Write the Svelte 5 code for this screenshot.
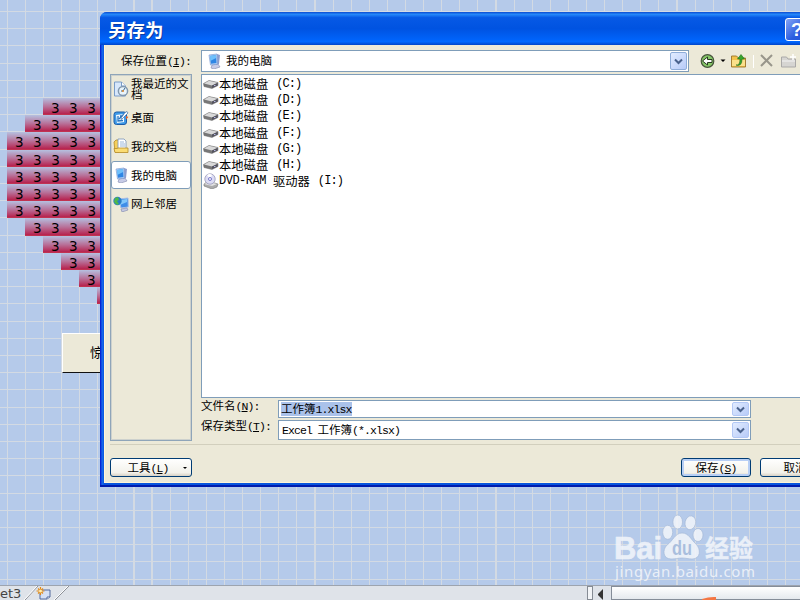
<script>
  const pinkRows = [43, 25, 7, 7, 7, 7, 7, 25, 43, 61, 79, 97].map((x) => ({
    x,
    count: Math.round((97 - x) / 18)
  }));

  const places = [
    { icon: "recent", label: "我最近的文档" },
    { icon: "desktop", label: "桌面" },
    { icon: "docs", label: "我的文档" },
    { icon: "computer", label: "我的电脑", active: true },
    { icon: "network", label: "网上邻居" }
  ];

  const drives = ["C", "D", "E", "F", "G", "H"];
</script>

{#snippet monitor()}
  <svg class="icon" viewBox="0 0 16 16">
    <path d="M6 12l6-1 2 3-6 2-3-1z" fill="#c7cbe6" stroke="#8288ad" stroke-width=".6" />
    <path d="M11 1l3 1-1 9-3 1z" fill="#8d9ccc" />
    <path d="M3 2l8-1 .5 10-7 1z" fill="#b9d3f6" stroke="#7f9fd4" stroke-width=".7" />
    <path d="M4 3l6-1 .5 8-5.500 .7z" fill="#2f86e4" />
    <path d="M4 3l6-1 .2 3-6 3z" fill="#6fc0fa" />
  </svg>
{/snippet}

{#snippet placeIcon(name)}
  {#if name === "computer"}
    {@render monitor()}
  {:else}
    <svg class="icon" viewBox="0 0 16 16">
      {#if name === "recent"}
        <path d="M1.500 1h7l4 4v10h-11z" fill="#d7e7fb" stroke="#7a9cc8" />
        <path d="M8.500 1v4h4" fill="#fff" stroke="#7a9cc8" />
        <circle cx="10" cy="10" r="4.600" fill="#e9f4fb" stroke="#8298ae" stroke-width="1.500" />
        <path d="M10 10l2-3M10 10H8" stroke="#36648c" fill="none" />
        <circle cx="10" cy="10" r="1" fill="#e08a30" />
      {:else if name === "desktop"}
        <rect x="1" y="2" width="12.500" height="12.500" rx="2.500" fill="#3f9ae8" stroke="#1c5ca8" />
        <path d="M3 5l8-1v8l-7 1z" fill="#f2f9ff" />
        <path d="M5 6v5l5-.5M6 9l5-5M7 6h3" stroke="#2874c0" stroke-width="1.300" fill="none" />
        <path d="M12 2.500l2-1 1 1.500-6 6-1 .5.500-2z" fill="#fff" stroke="#3d6da8" stroke-width=".7" />
        <path d="M13 6l2.500 1L13 9.500z" fill="#e1642c" />
      {:else if name === "docs"}
        <path d="M1 4l2-2h3v12H2z" fill="#f5cf5a" stroke="#b48a26" stroke-width=".8" />
        <path d="M5 1h6l2 2v9H5z" fill="#fff" stroke="#7893b8" stroke-width=".8" />
        <path d="M7 4h4M7 6h5M7 8h5" stroke="#9bb7da" />
        <path d="M1 10.500h3l1-.5h10v4.500H2z" fill="#fbdc73" stroke="#b48a26" stroke-width=".8" />
      {:else}
        <path d="M6 3l9-1 .3 9-7.300 1z" fill="#3f8de8" stroke="#a9bfe6" />
        <path d="M7 4l7-1v3l-7 3z" fill="#82c7fa" />
        <path d="M8 13l6-1 1 2-6 2z" fill="#c2c7e2" stroke="#8288ad" stroke-width=".6" />
        <circle cx="4.500" cy="5" r="4.200" fill="#287bc8" />
        <path d="M2 2l3-1 1 3-2 1 2 3-2 1-3-3z" fill="#4fb848" />
      {/if}
    </svg>
  {/if}
{/snippet}

{#snippet dropButton()}
  <span class="drop">
    <svg viewBox="0 0 9 7"><path d="M1 1.500l3.500 3.500L8 1.500" fill="none" stroke="#4a628c" stroke-width="2" /></svg>
  </span>
{/snippet}

<div class="screen">
  <div class="cells">
    {#each pinkRows as row}
      <div class="cell-row" style="margin-left: {row.x}px">
        {#each Array(row.count) as _}<span>3</span>{/each}
      </div>
    {/each}
  </div>
  <div class="sheet-button">惊喜</div>

  <footer>
    <div class="tab-name">et3</div>
    <svg class="tab-shape" viewBox="0 0 50 14">
      <path d="M4 14L17 0M34 14L48 0" stroke="#8c9097" />
      <path d="M3 14L16 0M33 14L47 0" stroke="#fff" />
      <path d="M19 4h10v7l-3 2h-7z" fill="#d5e1f6" stroke="#526a9e" />
      <path d="M26 13v-2h3" fill="#fff" stroke="#526a9e" />
      <path d="M19.500 1v8M15.500 5h8M17 2.500l5 5M22 2.500l-5 5" stroke="#e38b19" stroke-width="1.200" />
      <circle cx="19.500" cy="5" r="1.500" fill="#fff0b0" />
    </svg>
    <div class="splitter"></div>
    <div class="scroll-arrow"></div>
    <div class="thumb">
      <svg viewBox="0 0 14 3"><path d="M0 2Q6 0 12 0h2v3H0z" fill="#f47643" /></svg>
    </div>
  </footer>

  <svg class="watermark" viewBox="0 0 150 72">
    <g class="ink">
      <ellipse cx="54.700" cy="20.300" rx="5" ry="7" />
      <ellipse cx="64.700" cy="10" rx="4.800" ry="7" />
      <ellipse cx="77.300" cy="10.700" rx="5.300" ry="7" transform="rotate(12 77 11)" />
      <ellipse cx="85" cy="23" rx="5" ry="6.500" />
      <path d="M69 21c7 0 9 7 14 11 5 5 5 15-4 15-4 0-6-1-10-1s-6 1-11 1c-8 0-9-9-4-14 6-4 8-12 15-12z" />
      <text x="1" y="46.500" textLength="48" lengthAdjust="spacingAndGlyphs" class="bai">Bai</text>
      <text x="92" y="45" textLength="48" lengthAdjust="spacingAndGlyphs" class="exp">经验</text>
      <text x="2" y="65" textLength="140" class="url">jingyan.baidu.com</text>
    </g>
    <text x="59" y="43" textLength="20" lengthAdjust="spacingAndGlyphs" class="du">du</text>
  </svg>

  <div class="dialog">
    <header><h1>另存为</h1><span class="help">?</span></header>
    <div class="body">
      <div class="location">
        <span class="location-label">保存位置<i>(<u>I</u>):</i></span>
        <div class="combo look-in">
          {@render monitor()}
          <span>我的电脑</span>
          {@render dropButton()}
        </div>
        <svg class="toolbar" viewBox="0 0 104 18">
          <circle cx="11.500" cy="9" r="6.300" fill="#86c768" stroke="#46543b" stroke-width="1.200" />
          <path d="M6.500 9l5-4v2.500h4.500v3h-4.500V13z" fill="#fff" stroke="#283b20" />
          <path d="M24.500 7.500h5L27 10z" />
          <path d="M35.500 4h5l2 2h7v9h-14z" fill="#f3c34b" stroke="#9b7428" stroke-width=".9" />
          <path d="M36 8h13v6H36z" fill="#fbe08a" />
          <path d="M40 13q4 1 4-6h-2.500L45 2.500 48.500 7H46q0 8-6 6z" fill="#37a42d" stroke="#1b6e1a" stroke-width=".6" />
          <path d="M57.500 3v13" stroke="#fff" />
          <path d="M65 3l11 11M76 3L65 14" stroke="#98968b" stroke-width="2" />
          <path d="M85.500 5h5l1.500 2h7.500v8h-14z" fill="#d6d5d2" stroke="#aaa9a8" />
          <path d="M86 9h13" stroke="#f3f3f3" />
          <path d="M97 2v6M94 5h6" stroke="#fff" stroke-width="1.500" />
        </svg>
      </div>

      <div class="main">
        <nav>
          {#each places as place}
            <div class="place" class:active={place.active}>
              {@render placeIcon(place.icon)}
              <span>{place.label}</span>
            </div>
          {/each}
        </nav>

        <div class="right">
          <div class="files">
            {#each drives as drive}
              <div class="file">
                <svg class="icon" viewBox="0 0 16 16">
                  <path d="M.5 7.500L6 4.500l9 2v3L9 12.500l-8-2z" fill="#777" stroke="#666" stroke-width=".5" />
                  <path d="M1 7.500l5-2.700 8.500 1.900L9 9.500z" fill="#d9d9d9" />
                  <path d="M9 9.500l5.500-2.500v2.500L9 12z" fill="#555460" />
                  <path d="M11 9.500h1.500" stroke="#b7bae5" />
                </svg>
                <span>本地磁盘</span><i>({drive}:)</i>
              </div>
            {/each}
            <div class="file">
              <svg class="icon" viewBox="0 0 16 16">
                <path d="M1 11l4-3 10 3-1 3-5 2-8-3z" fill="#aaa" stroke="#777" stroke-width=".6" />
                <path d="M1 11l5-2 8 2-5 2z" fill="#e2e2e2" />
                <circle cx="7" cy="6" r="5.200" fill="#dcdcf4" stroke="#9999b9" stroke-width=".8" />
                <path d="M7 6L4 2q3-2 5 0z" fill="#fff" />
                <circle cx="7" cy="6" r="1.500" fill="#fff" stroke="#7777c9" />
              </svg>
              <i class="dvd">DVD-RAM</i><span>驱动器</span><i>(I:)</i>
            </div>
          </div>

          <div class="field name-field">
            <span class="field-label">文件名<i>(<u>N</u>):</i></span>
            <div class="combo">
              <mark>工作簿<i>1.xlsx</i></mark>
              {@render dropButton()}
            </div>
          </div>
          <div class="field type-field">
            <span class="field-label">保存类型<i>(<u>T</u>):</i></span>
            <div class="combo">
              <span class="type"><i>Excel</i> 工作簿<i>(*.xlsx)</i></span>
              {@render dropButton()}
            </div>
          </div>
        </div>
      </div>

      <div class="actions">
        <button class="tools">工具<i>(<u>L</u>)</i><b></b></button>
        <button class="save">保存<i>(<u>S</u>)</i></button>
        <button class="cancel">取消</button>
      </div>
    </div>
  </div>
</div>

<style>
  :global(body) {
    overflow: hidden;
  }

  .screen {
    position: relative;
    box-sizing: border-box;
    width: 800px;
    height: 600px;
    padding-top: 98px;
    overflow: hidden;
    color: #000;
    font: 11.5px/14px "Noto Sans CJK SC", sans-serif;
    background:
      repeating-linear-gradient(90deg, transparent 0 6.7px, #d3dae3 6.7px 7.8px, transparent 7.8px 18.1px),
      repeating-linear-gradient(transparent 0 10.9px, #d3dae3 10.9px 12px, transparent 12px 17.2px),
      #b5caea;
  }

  i {
    font: 11.5px/12px "Liberation Mono", monospace;
    letter-spacing: -0.9px;
  }

  u {
    text-underline-offset: 1px;
  }

  .icon {
    flex: none;
    width: 16px;
    height: 16px;
  }

  .cells {
    height: 235px;
  }

  .cell-row {
    display: flex;
    height: 17.2px;
    background: linear-gradient(#b5c0e0, #b87199 50%, #b72652 92%, #c63a50);
  }

  .cell-row span {
    box-sizing: border-box;
    width: 18.1px;
    padding-left: 8px;
    font: 13.5px/20px "DejaVu Sans", sans-serif;
  }

  .sheet-button {
    box-sizing: border-box;
    width: 120px;
    height: 40px;
    margin-left: 62px;
    padding-left: 27px;
    border: 1px solid #fff;
    border-bottom-color: #111;
    background: #ece9d8;
    font-size: 13px;
    line-height: 36px;
  }

  footer {
    display: flex;
    height: 14px;
    margin-top: 212px;
    border-top: 1px solid #9da4af;
    background: #dfe3e9;
  }

  .tab-name {
    width: 21px;
    color: #444;
    font: 13px/16px "DejaVu Sans", sans-serif;
  }

  .tab-shape {
    width: 50px;
    height: 14px;
  }

  .splitter {
    box-sizing: border-box;
    width: 6px;
    margin-left: 516px;
    border: 1px solid #858b94;
    background: #f2f4f7;
  }

  .scroll-arrow {
    margin: 3px 8px 0 5px;
    border: 5px solid transparent;
    border-left: 0;
    border-right-color: #333;
  }

  .thumb {
    flex: 1;
    border: 1px solid #858d99;
    border-right: 0;
    background: linear-gradient(#fff, #e5e9ee);
  }

  .thumb svg {
    display: block;
    width: 14px;
    height: 3px;
    margin: 10px 0 0 90px;
  }

  .watermark {
    position: absolute;
    left: 613px;
    top: 512px;
    width: 150px;
    height: 72px;
    opacity: 0.85;
  }

  .ink {
    fill: #f3f6fb;
    stroke: #a4b7d6;
    stroke-width: 0.7px;
  }

  .bai {
    stroke: #f3f6fb;
    font: bold 32px "Liberation Sans", sans-serif;
  }

  .exp {
    stroke: #f3f6fb;
    stroke-width: 0.4px;
    font: bold 24px "Noto Sans CJK SC", sans-serif;
  }

  .url {
    font: 15px "Noto Sans", sans-serif;
    stroke: none;
  }

  .du {
    fill: #a8bddd;
    font: bold 20px "Liberation Sans", sans-serif;
  }

  .dialog {
    position: absolute;
    box-sizing: border-box;
    left: 100px;
    top: 12px;
    width: 740px;
    height: 475px;
    padding: 0 4px 4px;
    border-radius: 7px 0 0 0;
    background: linear-gradient(90deg, #0019cf, #0831d9 1px, #166aee 2px, #0855dd 4px);
    box-shadow: inset 0 -2px #001cae;
  }

  header {
    display: flex;
    height: 33px;
    margin: 0 -4px;
    border-radius: 7px 0 0 0;
    background: linear-gradient(#0a4ad0, #2588fa 7%, #0759e5 17%, #0053e1 50%, #0061f7 80%, #0068ff 90%, #0044c8);
  }

  h1 {
    width: 677px;
    margin: 0;
    padding-left: 8px;
    color: #fff;
    font: bold 18.5px/34px "Noto Sans CJK SC", sans-serif;
    text-shadow: 1px 1px #0b3ba0;
  }

  .help {
    box-sizing: border-box;
    width: 23px;
    height: 23px;
    margin-top: 6px;
    border: 1px solid #fff;
    border-radius: 3px;
    background: linear-gradient(135deg, #85a5f5, #2b5de0 60%, #2353d5);
    color: #fff;
    font: bold 19px/22px "Liberation Sans", sans-serif;
    padding-left: 5px;
  }

  .body {
    box-sizing: border-box;
    height: 438px;
    padding: 5px 0 0 6px;
    background: #ece9d8;
    box-shadow: inset 1px -1px #fff5d8;
  }

  .location {
    display: flex;
    height: 24px;
  }

  .location-label {
    width: 80px;
    padding: 3px 0 0 11px;
  }

  .combo {
    display: flex;
    box-sizing: border-box;
    align-items: center;
    border: 1px solid #7f9db9;
    background: #fff;
  }

  .look-in {
    width: 488px;
    height: 22px;
    padding-left: 4px;
    gap: 4px;
  }

  .look-in > span:not(.drop) {
    padding-bottom: 2px;
  }

  .drop {
    display: flex;
    box-sizing: border-box;
    align-items: center;
    justify-content: center;
    width: 17px;
    height: calc(100% - 2px);
    margin: 1px 1px 1px auto;
    border: 1px solid #b3c8f5;
    border-radius: 2px;
    background: linear-gradient(135deg, #e2ecff, #b7cbf8);
  }

  .look-in .drop {
    border-color: #8fadd8;
  }

  .drop svg {
    width: 9px;
    height: 7px;
  }

  .toolbar {
    width: 104px;
    height: 18px;
    margin: 2px 0 0 7px;
  }

  .main {
    display: flex;
    gap: 9px;
    height: 370px;
  }

  nav {
    box-sizing: border-box;
    width: 82px;
    height: 367px;
    border: 1px solid #8fa5b9;
    box-shadow: inset 0 0 0 1px #cdd1cd;
  }

  .place {
    display: flex;
    box-sizing: border-box;
    align-items: center;
    width: 80px;
    height: 28.6px;
    gap: 2px;
    padding-left: 2px;
    line-height: 11px;
  }

  .place span {
    width: 60px;
  }

  .active {
    border: 1px solid #7f9db9;
    border-radius: 3px;
    background: #fff;
    padding-left: 1px;
  }

  .right {
    flex: 1;
  }

  .files {
    box-sizing: border-box;
    height: 324px;
    padding: 1px 0 0 1px;
    border: 1px solid #7f9db9;
    background: #fff;
  }

  .file {
    display: flex;
    align-items: center;
    height: 16.2px;
    font-size: 12.3px;
  }

  .file i {
    margin-left: 8px;
    font-size: 12px;
    letter-spacing: -0.9px;
  }

  .file .dvd {
    margin: 0 7px 0 0;
    letter-spacing: -0.5px;
  }

  .field {
    display: flex;
  }

  .field-label {
    width: 77px;
    line-height: 15px;
  }

  .field .combo {
    width: 473px;
    height: 18px;
    margin-top: 2px;
    padding-left: 2px;
  }

  .type-field .combo {
    height: 20px;
  }

  .name-field {
    height: 20px;
  }

  mark {
    background: #aac2ea;
    color: #000;
    line-height: 13px;
  }

  .type {
    padding-left: 1px;
    word-spacing: 3px;
    line-height: 13px;
  }

  .actions {
    display: flex;
    height: 34px;
    padding-top: 13px;
    border-top: 1px solid #d2cfbd;
  }

  button {
    box-sizing: border-box;
    flex: none;
    height: 19px;
    padding: 0;
    border: 1px solid #003c74;
    border-radius: 3px;
    background: linear-gradient(#fff, #f3f2eb 80%, #d8d1c4);
    font: 11.5px/15px "Noto Sans CJK SC", sans-serif;
    color: #000;
  }

  .tools {
    width: 82px;
  }

  .tools b {
    display: inline-block;
    margin: 0 -12px 3px 14px;
    border: 2px solid transparent;
    border-top-color: #000;
    border-bottom: 0;
  }

  .save {
    width: 70px;
    margin-left: 489px;
    box-shadow: inset 0 0 0 2px #b8cff5;
  }

  .cancel {
    width: 70px;
    margin-left: 9px;
  }
</style>
